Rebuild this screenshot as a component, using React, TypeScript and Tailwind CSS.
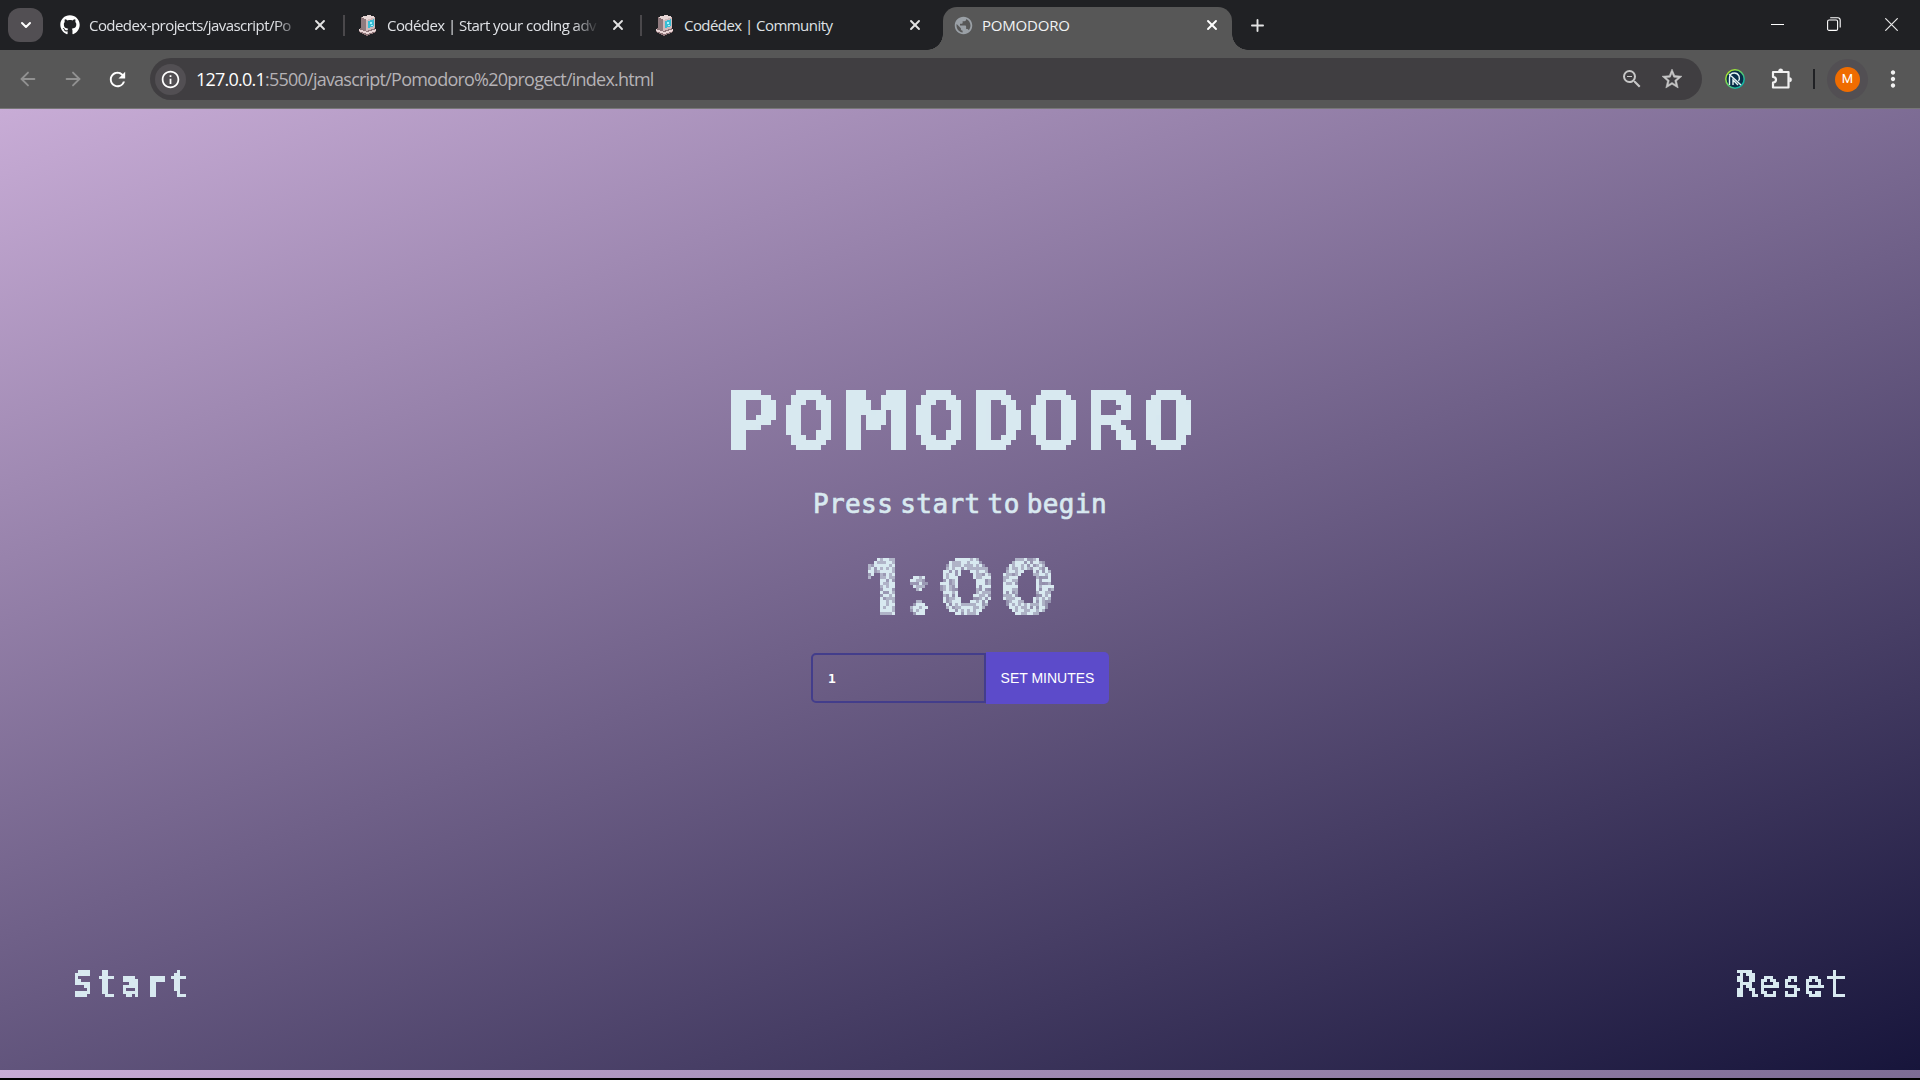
import React from "react";
import { ChevronDown, ArrowLeft, ArrowRight, X, Plus } from "lucide-react";
import { MdRefresh, MdOutlineInfo, MdZoomOut, MdStarOutline, MdMoreVert, MdPublic } from "react-icons/md";
import { FaGithub } from "react-icons/fa";

function Computer() {
  return (
    <svg width="20" height="22" viewBox="0 0 20 22" shapeRendering="crispEdges">
      <path d="M3 3l9-2 5 2v11l1 2v2l-9 4-8-4v-3l2-2z" fill="#8d7477" />
      <path d="M3 3l8-2 6 2-8 3z" fill="#e6d6d5" />
      <path d="M3 4l5 2v11l-5-3z" fill="#8f7a7e" />
      <path d="M8 6l9-3v11l-9 3z" fill="#cfb9ba" />
      <path d="M10 7l6-2v7l-6 2z" fill="#38bcd4" />
      <path d="M12 8h2v2h-2zM13 11h2v1h-2z" fill="#a5f3fc" />
      <path d="M1 15l8 3 9-3v2l-9 3-8-3z" fill="#e9d6d6" />
    </svg>
  );
}

function Mosaic({ id, size, cut }: { id: string; size: number; cut: string }) {
  const c = Math.floor(size / 2);
  return (
    <filter id={id} x="0" y="0" width="100%" height="100%" colorInterpolationFilters="sRGB">
      <feFlood x={c} y={c} width="1" height="1" floodColor="#fff" />
      <feComposite width={size} height={size} />
      <feTile result="grid" />
      <feComponentTransfer in="SourceGraphic" result="solid">
        <feFuncA type="discrete" tableValues={cut} />
      </feComponentTransfer>
      <feComposite in="solid" in2="grid" operator="in" />
      <feMorphology operator="dilate" radius={c} />
    </filter>
  );
}

function Filters() {
  return (
    <svg width="0" height="0" className="absolute">
      <Mosaic id="mosaic5" size={5} cut="0 1" />
      <Mosaic id="mosaic3" size={3} cut="0 1 1" />
      <filter id="dither" x="0" y="0" width="100%" height="100%" colorInterpolationFilters="sRGB">
        <feFlood x="1" y="1" width="1" height="1" floodColor="#fff" />
        <feComposite width="3" height="3" />
        <feTile result="grid" />
        <feComponentTransfer in="SourceGraphic" result="solid">
          <feFuncA type="discrete" tableValues="0 1" />
        </feComponentTransfer>
        <feComposite in="solid" in2="grid" operator="in" />
        <feMorphology operator="dilate" radius="1" result="blocks" />
        <feTurbulence type="fractalNoise" baseFrequency="0.31" numOctaves="1" seed="4" />
        <feColorMatrix values="0 0 0 0 1  0 0 0 0 1  0 0 0 0 1  1 0 0 0 0" />
        <feComponentTransfer>
          <feFuncA type="discrete" tableValues="0.35 0.35 0.35 0.4 0.6 1 1 1 1 1" />
        </feComponentTransfer>
        <feComposite in2="grid" operator="in" />
        <feMorphology operator="dilate" radius="1" result="noise" />
        <feComposite in="blocks" in2="noise" operator="in" />
      </filter>
    </svg>
  );
}

function Tab({ icon, title, width, fade }: { icon: React.ReactNode; title: string; width: string; fade?: boolean }) {
  return (
    <div className={`flex h-[50px] shrink-0 items-center ${width}`}>
      <span className="flex w-[22px] shrink-0 justify-center">{icon}</span>
      <span className={`ml-[8px] w-[212px] shrink-0 overflow-hidden whitespace-nowrap text-[15px] tracking-[-0.55px] text-[#dfe1e5] ${fade ? "[mask-image:linear-gradient(to_right,black_88%,transparent)]" : ""}`}>{title}</span>
      <X className="ml-[11px] shrink-0 text-[#e3e3e3]" size={16} strokeWidth={2.8} />
    </div>
  );
}

function WindowControls() {
  return (
    <div className="mr-[22px] mt-[17px] flex h-[14px] items-center text-white">
      <i className="h-px w-[13px] bg-white" />
      <svg width="14" height="14" viewBox="0 0 14 14" fill="none" stroke="#fff" strokeWidth="1.1" className="ml-[43px]">
        <rect x="0.6" y="3" width="10" height="10.4" rx="1.5" />
        <path d="M3.2 0.8h7.6q2.4 0 2.4 2.4v7.2" />
      </svg>
      <svg width="13" height="13" viewBox="0 0 13 13" stroke="#e8e8e8" strokeWidth="1.2" className="ml-[44px]">
        <path d="M.3.3l12.4 12.4M12.7.3L.3 12.7" />
      </svg>
    </div>
  );
}

export default function App() {
  return (
    <div className="flex h-[1080px] w-[1920px] flex-col overflow-hidden bg-black font-['Open_Sans','Noto_Sans',sans-serif]">
      <Filters />
      <header className="flex h-[50px] shrink-0 bg-[#202124]">
        <div className="ml-2 mr-[16px] mt-2 flex h-[34px] w-[35px] shrink-0 items-center justify-center rounded-xl bg-[#524f53]">
          <ChevronDown size={16} strokeWidth={3} className="text-white" />
        </div>
        <Tab width="w-[284px]" fade icon={<FaGithub size={20} className="text-white" />} title="Codedex-projects/javascript/Po" />
        <i className="mr-[12px] mt-[15px] h-[21px] w-[2px] bg-[#4a484b]" />
        <Tab width="w-[283px]" fade icon={<Computer />} title="Codédex | Start your coding adv" />
        <i className="mr-[12px] mt-[15px] h-[21px] w-[2px] bg-[#4a484b]" />
        <Tab width="w-[273px]" icon={<Computer />} title="Codédex | Community" />
        <div className="mt-[7px] flex h-[43px] w-[321px] shrink-0 items-end">
          <i className="h-4 w-4 bg-[radial-gradient(circle_at_0_0,transparent_15.5px,#575757_16px)]" />
          <div className="flex h-[43px] w-[290px] items-center rounded-t-[14px] bg-[#575757] pb-[7px] pl-[10px]">
            <MdPublic size={21} className="text-[#9aa0a6]" />
            <span className="ml-[8px] w-[222px] text-[15px] tracking-[-0.2px] text-[#f1f3f4]">POMODORO</span>
            <X size={16} strokeWidth={2.8} className="text-white" />
          </div>
          <i className="h-4 w-4 bg-[radial-gradient(circle_at_100%_0,transparent_15.5px,#575757_16px)]" />
        </div>
        <Plus size={19} strokeWidth={2.4} className="mr-auto mt-[16px] text-[#e3e3e3]" />
        <WindowControls />
      </header>
      <nav className="flex h-[59px] shrink-0 items-center border-b border-[#777] bg-[#575757]">
        <ArrowLeft size={22} className="ml-[17px] text-[#919191]" />
        <ArrowRight size={22} className="ml-[23px] text-[#919191]" />
        <MdRefresh size={23} className="ml-[22px] text-white" />
        <div className="ml-[21px] flex h-[42px] w-[1552px] shrink-0 items-center rounded-full bg-[#403e41] pl-[5px]">
          <span className="flex size-[31px] items-center justify-center rounded-full bg-[#524f53]">
            <MdOutlineInfo size={21} className="text-white" />
          </span>
          <span className="ml-[10px] w-[1424px] text-[18px] tracking-[-0.77px] text-[#b5b2b6]">
            <b className="font-normal text-white">127.0.0.1</b>:5500/javascript/Pomodoro%20progect/index.html
          </span>
          <MdZoomOut size={24} className="text-[#c7c7c7]" />
          <MdStarOutline size={24} stroke="currentColor" strokeWidth={0.5} className="ml-4 text-[#c7c7c7]" />
        </div>
        <svg width="20" height="20" viewBox="0 0 20 20" fill="none" className="ml-[23px] shrink-0">
          <defs>
            <linearGradient id="ring" x1="0" y1="0" x2="1" y2="1">
              <stop offset="0.2" stopColor="#a3e635" />
              <stop offset="0.8" stopColor="#14b8a6" />
            </linearGradient>
          </defs>
          <circle cx="10" cy="10" r="9.2" fill="#082f49" stroke="url(#ring)" strokeWidth="1.5" />
          <path d="M4.5 16V9q0-5 5-5 3 0 4.5 3 1 3-.5 5M4 5l12 11M8 16v-5l5 5" stroke="#e5f5f5" strokeWidth="1.4" />
        </svg>
        <svg width="22" height="22" viewBox="0 0 22 22" fill="none" stroke="#f1f1f1" strokeWidth="2.2" strokeLinejoin="round" className="ml-[26px] shrink-0">
          <path d="M2 4h15.5v15.5H2v-4.8q3-.3 3-2.9T2 8.9z" />
          <path d="M7.5 3a2.2 2.2 0 0 1 4.4 0zM18.5 9.5a2.2 2.2 0 0 1 0 4.4z" fill="#f1f1f1" strokeWidth="0.5" />
        </svg>
        <i className="ml-[20px] h-5 w-[2px] shrink-0 bg-[#202124]" />
        <span className="ml-[12px] flex size-[41px] shrink-0 items-center justify-center rounded-full bg-[#524f53]">
          <span className="flex size-[25px] items-center justify-center rounded-full bg-[#ef6c00] font-[Roboto] text-[13px] text-white">M</span>
        </span>
        <MdMoreVert size={26} className="ml-[12px] shrink-0 text-[#f1f1f1]" />
      </nav>
      <main className="flex h-[961px] shrink-0 flex-col items-center bg-[linear-gradient(160deg,#c8acd6,#17153b)] font-['DejaVu_Sans_Mono',monospace] text-[#d8e9f0]">
        <h1 className="ml-[4px] mt-[271px] h-[85px] scale-x-[1.09] text-[82px] font-bold leading-[84px] tracking-[3.1px] [filter:url(#mosaic5)]">
          PO<span className="mr-[14.5px] inline-block origin-left scale-x-[1.32]">M</span>ODORO
        </h1>
        <p className="mt-[22px] h-[34px] text-[26px] leading-[34px] tracking-[0.4px] [-webkit-text-stroke:0.7px_#d8e9f0] [word-spacing:-9px]">Press start to begin</p>
        <div className="mt-[16px] h-[100px] pl-[4px] font-[Inter] text-[78px] font-black leading-[100px] tracking-[5.5px] [filter:url(#dither)]">1:00</div>
        <div className="mt-[15px] flex h-[52px] items-center">
          <div className="flex h-[50px] w-[175px] items-center rounded-l-[5px] border-2 border-[#433d8b] pl-[15px] pt-[2px] text-[13px] font-bold text-white">1</div>
          <button className="h-[52px] w-[123px] rounded-r-[5px] bg-[#5c4bca] font-['Liberation_Sans',Arial,sans-serif] text-[14px] text-white">SET MINUTES</button>
        </div>
        <div className="mb-[60px] mt-auto flex w-full justify-between px-[72px] text-[34px] leading-[52px]">
          <span className="tracking-[3.8px] [-webkit-text-stroke:1.2px_#d8e9f0] [filter:url(#mosaic3)]">Start</span>
          <span className="tracking-[1.8px] [-webkit-text-stroke:0.8px_#d8e9f0] [filter:url(#mosaic3)]">Reset</span>
        </div>
      </main>
      <div className="h-[8px] shrink-0 bg-[linear-gradient(160deg,#c8acd6,#17153b)] bg-[length:1920px_961px]" />
    </div>
  );
}
